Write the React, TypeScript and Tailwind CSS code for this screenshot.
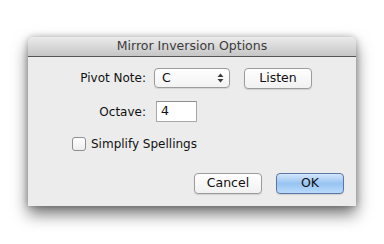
import React from "react";

const font = { fontFamily: '"DejaVu Sans", "Lucida Grande", sans-serif' };

function PopupArrows() {
  return (
    <svg width="7" height="10" viewBox="0 0 7 10" className="text-[#3a3a3a]">
      <path d="M3.5 0.5 L6.5 4 L0.5 4 Z" fill="currentColor" />
      <path d="M3.5 9.5 L6.5 6 L0.5 6 Z" fill="currentColor" />
    </svg>
  );
}

function PushButton({ label, primary }: { label: string; primary?: boolean }) {
  return (
    <button
      className={`h-[21px] w-[68px] rounded-[4px] border text-[12.5px] leading-none text-[#111] shadow-[0_1px_1px_rgba(0,0,0,0.12)] ${
        primary
          ? "border-[#5b77a3] bg-gradient-to-b from-[#d3e6fb] via-[#98c4f2] to-[#b9dafb]"
          : "border-[#9c9c9c] bg-gradient-to-b from-[#ffffff] to-[#f1f1f1]"
      }`}
    >
      {label}
    </button>
  );
}

export default function App() {
  return (
    <div className="h-[244px] w-[384px] bg-white pl-[28px] pt-[37px]" style={font}>
      <div className="w-[328px] overflow-hidden rounded-t-[5px] bg-[#ececec] shadow-[0_8px_16px_rgba(0,0,0,0.55),0_0_6px_rgba(0,0,0,0.25)]">
        {/* Title bar */}
        <div className="flex h-[20px] items-center justify-center border-b border-[#555] bg-gradient-to-b from-[#ebebeb] to-[#c6c6c6] text-[12.5px] text-[#3b3b3b]">
          Mirror Inversion Options
        </div>

        <div className="flex flex-col pl-[40px] pr-[12px] pt-[11px] pb-[12px] text-[12px] text-[#111]">
          {/* Pivot note */}
          <div className="flex h-[20px] items-center">
            <div className="w-[78px] text-right">Pivot Note:</div>
            <div className="ml-[8px] flex h-[20px] w-[76px] items-center justify-between rounded-[4px] border border-[#9c9c9c] bg-gradient-to-b from-white to-[#f2f2f2] pl-[7px] pr-[5px] shadow-[0_1px_1px_rgba(0,0,0,0.1)]">
              <span className="text-[12.5px]">C</span>
              <PopupArrows />
            </div>
            <div className="ml-[14px]">
              <PushButton label="Listen" />
            </div>
          </div>

          {/* Octave */}
          <div className="mt-[13px] flex h-[21px] items-center">
            <div className="w-[78px] text-right">Octave:</div>
            <div className="ml-[10px] flex h-[21px] w-[41px] items-center border border-[#a8a8a8] border-t-[#8e8e8e] bg-white pl-[4px] text-[12.5px]">
              4
            </div>
          </div>

          {/* Checkbox */}
          <div className="mt-[14px] flex h-[16px] items-center pl-[4px]">
            <div className="h-[14px] w-[14px] rounded-[3px] border border-[#8f8f8f] bg-gradient-to-b from-white to-[#ededed]" />
            <span className="ml-[5px]">Simplify Spellings</span>
          </div>

          {/* Buttons */}
          <div className="mt-[21px] flex justify-end gap-[14px]">
            <PushButton label="Cancel" />
            <PushButton label="OK" primary />
          </div>
        </div>
      </div>
    </div>
  );
}
